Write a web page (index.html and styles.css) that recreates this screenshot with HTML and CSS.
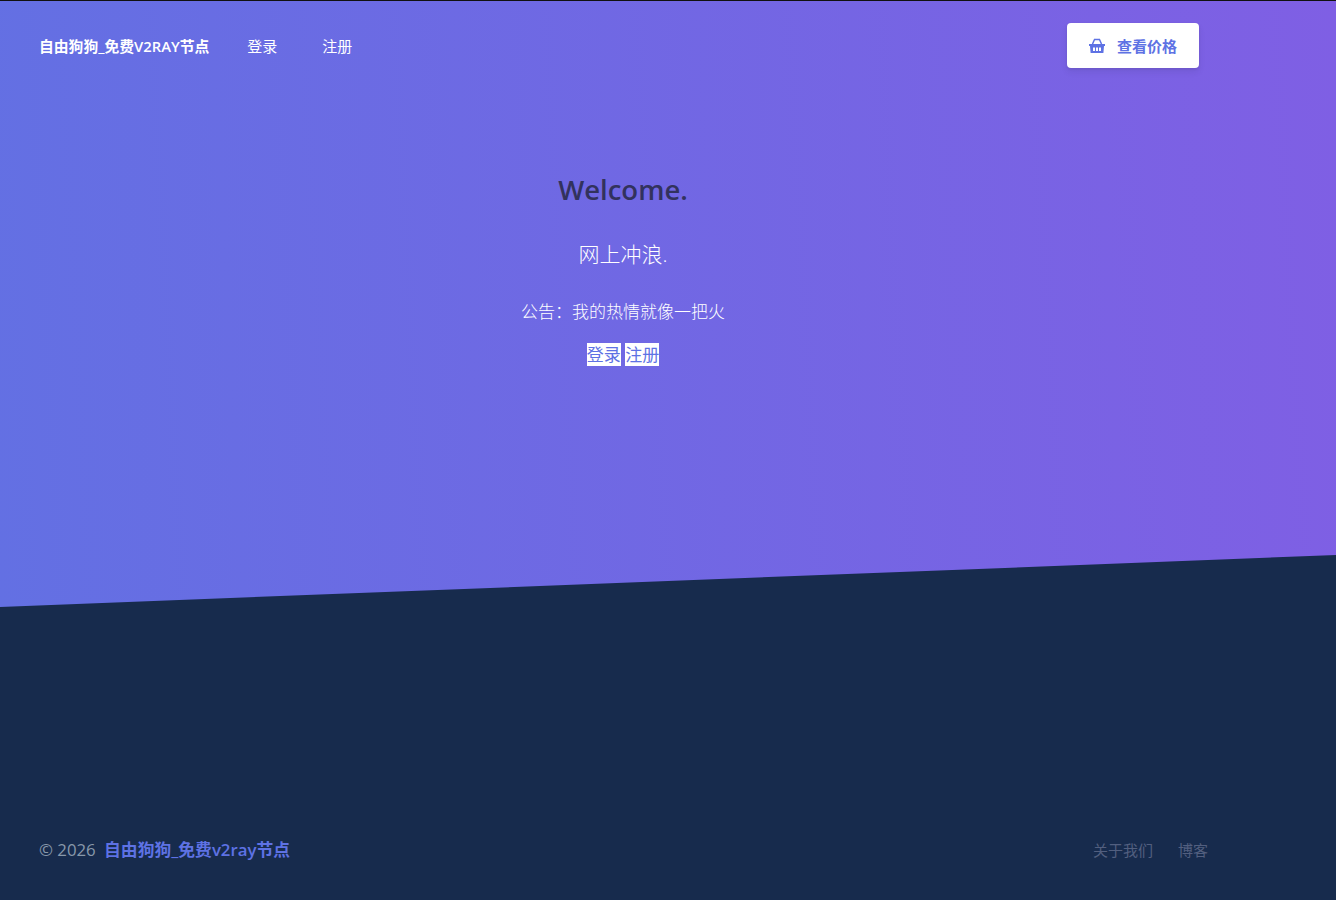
FILE: index.html
```html
<!DOCTYPE html>
<html lang="zh">
<head>
    <meta charset="UTF-8">
    <meta name="viewport" content="width=device-width, initial-scale=1.0">
    <title>自由狗狗_免费V2RAY节点</title>
    <link rel="stylesheet" href="styles.css">
</head>
<body>
    <section class="hero">
        <div class="wrap">
            <nav class="navbar">
                <a href="#" class="brand">自由狗狗_免费V2RAY节点</a>
                <a href="#" class="nav-link">登录</a>
                <a href="#" class="nav-link">注册</a>
                <a href="#" class="btn-price">
                    <svg class="basket" viewBox="0 0 16 15" width="16" height="15" aria-hidden="true">
                        <path d="M3.500 6 5.500 1.500M12.500 6 10.500 1.500M5 1.500h6" fill="none" stroke="#5e72e4" stroke-width="1.500"/>
                        <path fill="#5e72e4" fill-rule="evenodd" d="M0 6h16v2h-1l-.6 7H1.600L1 8H0zM4 9.500v3.500h2V9.500zM7 9.500v3.500h2V9.500zM10 9.500v3.500h2V9.500z"/>
                    </svg>
                    <span>查看价格</span>
                </a>
            </nav>
            <div class="intro">
                <h1>Welcome.</h1>
                <p class="lead">网上冲浪.</p>
                <p class="notice">公告：我的热情就像一把火</p>
                <p class="actions"><a href="#">登录</a> <a href="#">注册</a></p>
            </div>
        </div>
        <svg class="separator" viewBox="0 0 1336 52" preserveAspectRatio="none" aria-hidden="true">
            <polygon points="0,52 1336,0 1336,52" fill="#172b4d"/>
        </svg>
    </section>

    <footer class="footer">
        <div class="wrap footer-row">
            <div class="copyright">© 2026 <a href="#">自由狗狗_免费v2ray节点</a></div>
            <div class="footer-links">
                <a href="#">关于我们</a>
                <a href="#">博客</a>
            </div>
        </div>
    </footer>
</body>
</html>
```

FILE: styles.css
```css
* {
    box-sizing: border-box;
}
body {
    margin: 0;
    background: #172b4d;
    font-family: "Open Sans", "Noto Sans CJK SC", sans-serif;
    color: #fff;
}
a {
    text-decoration: none;
}
.wrap {
    width: 1246px;
}
.hero {
    position: relative;
    height: 607px;
    border-top: 1px solid #111;
    background: linear-gradient(87deg, #6370e3, #7f5fe4);
}
.separator {
    position: absolute;
    left: 0;
    bottom: 0;
    width: 100%;
    height: 52px;
    display: block;
}
.navbar {
    display: flex;
    align-items: center;
    height: 89px;
    padding: 0 47px 0 39px;
}
.brand {
    color: #fff;
    font-size: 14.800px;
    font-weight: 600;
    margin-right: 38px;
}
.nav-link {
    color: #fff;
    font-size: 15px;
    margin-right: 45px;
}
.btn-price {
    display: flex;
    align-items: center;
    gap: 12px;
    margin-left: auto;
    width: 132px;
    height: 45px;
    padding-left: 22px;
    background: #fff;
    border-radius: 4px;
    color: #5e72e4;
    font-size: 15px;
    font-weight: 600;
    box-shadow: 0 4px 6px rgba(50, 50, 93, .11), 0 1px 3px rgba(0, 0, 0, .08);
}
.intro {
    padding-top: 82px;
    text-align: center;
}
.intro h1 {
    margin: 0;
    font-size: 27.500px;
    line-height: 36px;
    font-weight: 600;
    color: #32325d;
}
.lead {
    margin: 31px 0 0;
    font-size: 21px;
    line-height: 30px;
    font-weight: 300;
}
.notice {
    margin: 31px 0 0;
    font-size: 17px;
    line-height: 24px;
    font-weight: 300;
}
.actions {
    margin: 19px 0 0;
    font-size: 17px;
    line-height: 24px;
}
.actions a {
    background: #fff;
    color: #5e72e4;
}
.footer {
    height: 293px;
    background: #172b4d;
}
.footer-row {
    display: flex;
    justify-content: space-between;
    align-items: flex-start;
    padding: 231px 38px 0 39px;
}
.copyright {
    font-size: 16.800px;
    line-height: 24px;
    color: #8898aa;
}
.copyright a {
    margin-left: 4px;
    color: #5e72e4;
    font-weight: 600;
}
.footer-links {
    display: flex;
    gap: 25px;
    line-height: 24px;
}
.footer-links a {
    font-size: 15px;
    color: #525f7f;
}
```
